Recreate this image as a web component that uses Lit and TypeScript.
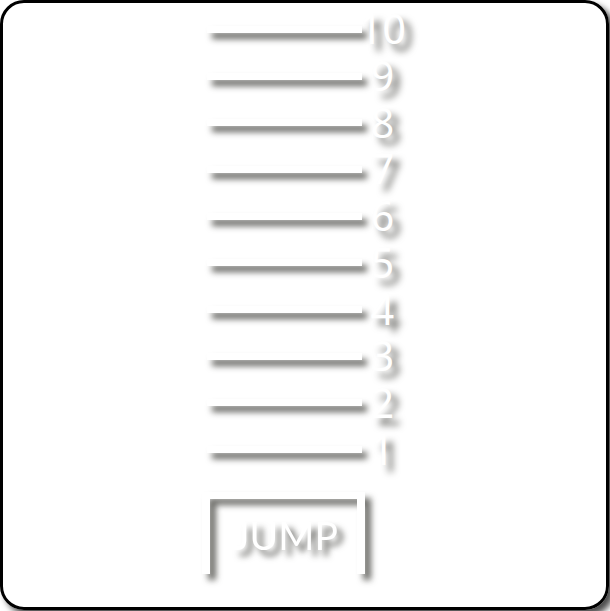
import { LitElement, html, css } from "lit";
import { customElement } from "lit/decorators.js";

const LEVELS = [10, 9, 8, 7, 6, 5, 4, 3, 2, 1];

@customElement("app-root")
export class AppRoot extends LitElement {
  static styles = css`
    :host {
      display: block;
      box-sizing: border-box;
      min-height: 100vh;
      padding: 0 1px 1px 0;
      overflow: hidden;
      background: #fff;
      font-family: "Noto Sans", "Open Sans", sans-serif;
      color: #fff;
    }
    .panel {
      box-sizing: border-box;
      min-height: calc(100vh - 1px);
      display: flex;
      flex-direction: column;
      align-items: center;
      padding: 3px 4px 0 0;
      border: 3px solid #000;
      border-radius: 24px;
      box-shadow: 5px 5px 6px rgba(0, 0, 0, 0.7);
    }
    .meter {
      display: flex;
      flex-direction: column;
      align-items: flex-start;
      gap: 19px;
    }
    .scale {
      display: grid;
      grid-template-rows: repeat(10, 1fr);
      height: 467px;
      margin: 0;
      padding: 0 0 0 5px;
      list-style: none;
    }
    .level {
      display: flex;
      align-items: center;
      min-height: 0;
    }
    .bar {
      width: 155px;
      height: 7px;
      background: #fff;
      box-shadow: 5px 6px 6px rgba(30, 30, 25, 0.66);
    }
    .number {
      display: flex;
      justify-content: center;
      width: 41px;
      padding-bottom: 2px;
      font-size: 41px;
      line-height: 44px;
      text-shadow: 7px 7px 7px rgba(30, 30, 25, 0.66);
    }
    .jump {
      box-sizing: border-box;
      width: 163px;
      height: 82px;
      padding: 0 0 4px 4px;
      border: 8px solid #fff;
      border-top-width: 7px;
      border-bottom: 0;
      background: none;
      color: inherit;
      font-family: Lato, "Noto Sans", sans-serif;
      font-size: 39px;
      line-height: 48px;
      filter: drop-shadow(6px 6px 3px rgba(30, 30, 25, 0.66));
    }
  `;

  render() {
    return html`
      <main class="panel">
        <div class="meter">
          <ol class="scale" reversed>
            ${LEVELS.map(
              (n) => html`<li class="level">
                <span class="bar"></span><span class="number">${n}</span>
              </li>`
            )}
          </ol>
          <button class="jump" type="button">JUMP</button>
        </div>
      </main>
    `;
  }
}
